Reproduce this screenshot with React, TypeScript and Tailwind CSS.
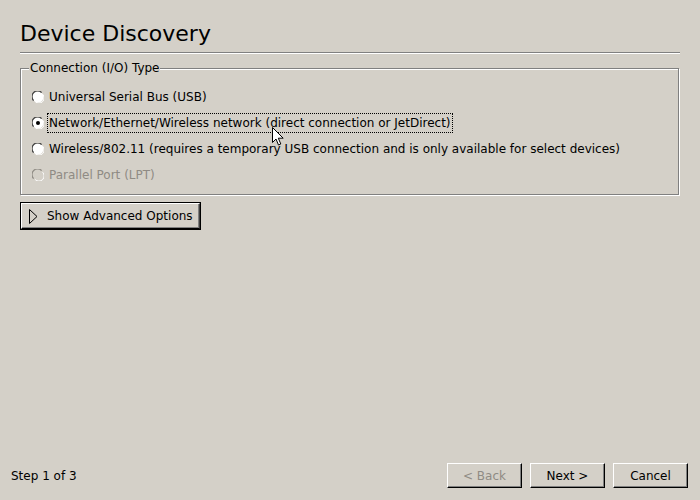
import React from "react";

const options = [
  { label: "Universal Serial Bus (USB)", checked: false, disabled: false },
  { label: "Network/Ethernet/Wireless network (direct connection or JetDirect)", checked: true, disabled: false },
  { label: "Wireless/802.11 (requires a temporary USB connection and is only available for select devices)", checked: false, disabled: false },
  { label: "Parallel Port (LPT)", checked: false, disabled: true },
];

function Radio({ checked, disabled }: { checked: boolean; disabled: boolean }) {
  return (
    <svg width="12" height="12" viewBox="0 0 12 12" className="shrink-0">
      <circle cx="6" cy="6" r="5.5" fill={disabled ? "#d4d0c8" : "#ffffff"} />
      <path d="M1.6 9.6 A5.4 5.4 0 0 1 9.6 1.6" fill="none" stroke={disabled ? "#8f8b84" : "#404040"} strokeWidth="1.3" />
      <path d="M10.6 3.2 A5.2 5.2 0 0 1 3.2 10.6" fill="none" stroke="#ffffff" strokeWidth="1" />
      {checked && <circle cx="6" cy="6" r="2" fill="#000000" />}
    </svg>
  );
}

function WizardButton({ children, disabled }: { children: React.ReactNode; disabled?: boolean }) {
  return (
    <button
      className={
        "w-[75px] h-[25px] flex items-center justify-center border-t border-l border-t-white border-l-white border-b border-r border-b-black border-r-black shadow-[inset_-1px_-1px_0_#808080] " +
        (disabled ? "text-[#8f8b84]" : "text-black")
      }
    >
      {children}
    </button>
  );
}

export default function App() {
  return (
    <div
      className="relative w-[700px] h-[500px] bg-[#d4d0c8] flex flex-col text-[12px] text-black"
      style={{ fontFamily: '"DejaVu Sans", sans-serif' }}
    >
      {/* Header */}
      <div className="px-[20px] pt-[20px]">
        <h1 className="text-[22px] leading-[28px] text-black">Device Discovery</h1>
      </div>
      <div className="mx-[20px] mt-[4px] h-[2px] border-t border-t-[#808080] border-b border-b-white" />

      {/* Connection type group */}
      <fieldset className="ml-[20px] mt-[6px] w-[659px] border border-[#808080] shadow-[inset_1px_1px_0_#fff,1px_1px_0_#fff] pl-[11px] pt-[8px] pb-[6px]">
        <legend className="ml-[-3px] px-[1px] bg-[#d4d0c8] leading-[16px]">Connection (I/O) Type</legend>
        <div className="flex flex-col">
          {options.map((o) => (
            <div key={o.label} className="h-[26px] flex items-center">
              <Radio checked={o.checked} disabled={o.disabled} />
              <span
                className={
                  "ml-[3px] h-[20px] flex items-center px-[1px] border " +
                  (o.checked ? "border-dotted border-black" : "border-transparent") +
                  (o.disabled ? " text-[#8f8b84]" : "")
                }
              >
                {o.label}
              </span>
            </div>
          ))}
        </div>
      </fieldset>

      {/* Advanced options */}
      <div className="px-[20px] pt-[7px]">
        <button className="h-[28px] w-[181px] border border-black flex">
          <span className="flex-1 flex items-center border-t border-l border-t-white border-l-white border-b border-r border-b-black border-r-[#404040] shadow-[inset_-1px_-1px_0_#808080] pl-[7px]">
            <svg width="9" height="15" viewBox="0 0 9 15" className="shrink-0">
              <path d="M0.5 0.5 L8 7.5 L0.5 14.5 Z" fill="none" stroke="#000" strokeWidth="1" />
            </svg>
            <span className="ml-[9px]">Show Advanced Options</span>
          </span>
        </button>
      </div>

      <div className="flex-1" />

      {/* Footer */}
      <div className="flex items-center pl-[11px] pr-[12px] pb-[12px]">
        <span className="flex-1">Step 1 of 3</span>
        <div className="flex gap-[8px]">
          <WizardButton disabled>&lt; Back</WizardButton>
          <WizardButton>Next &gt;</WizardButton>
          <WizardButton>Cancel</WizardButton>
        </div>
      </div>

      {/* Mouse pointer */}
      <svg className="absolute left-[272px] top-[127px]" width="13" height="20" viewBox="0 0 13 20">
        <path d="M0.5 0.5 L0.5 15.5 L4 12 L6.5 18 L8.8 17 L6.3 11.2 L11.2 11.2 Z" fill="#fff" stroke="#000" strokeWidth="1" strokeLinejoin="round" />
      </svg>
    </div>
  );
}
